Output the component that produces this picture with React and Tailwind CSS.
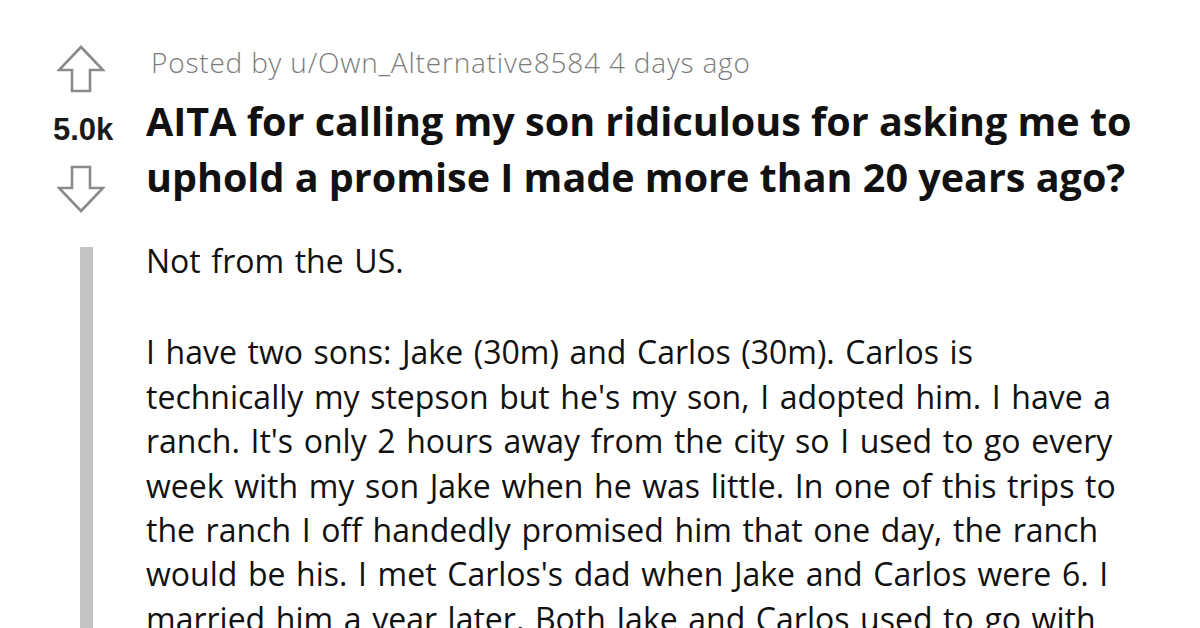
import React from 'react';

const ArrowUp = () => (
  <svg width="48" height="48" viewBox="0 0 48 48" fill="none">
    <path d="M24 2 L46 25 L33 25 L33 46 L15 46 L15 25 L2 25 Z" stroke="#8a8a8a" strokeWidth="2.6" strokeLinejoin="miter" />
  </svg>
);

const ArrowDown = () => (
  <svg width="48" height="48" viewBox="0 0 48 48" fill="none">
    <path d="M24 46 L46 23 L33 23 L33 2 L15 2 L15 23 L2 23 Z" stroke="#8a8a8a" strokeWidth="2.6" strokeLinejoin="miter" />
  </svg>
);

// lines as laid out in the post image
const BODY_LINES = [
  'I have two sons: Jake (30m) and Carlos (30m). Carlos is',
  "technically my stepson but he's my son, I adopted him. I have a",
  "ranch. It's only 2 hours away from the city so I used to go every",
  'week with my son Jake when he was little. In one of this trips to',
  'the ranch I off handedly promised him that one day, the ranch',
  "would be his. I met Carlos's dad when Jake and Carlos were 6. I",
  'married him a year later. Both Jake and Carlos used to go with',
  'me to the ranch every weekend after that.',
];

export default function App() {
  return (
    <div className="w-[1200px] h-[628px] overflow-hidden bg-white">
      <div className="flex">
        {/* vote column */}
        <div className="w-[146px] shrink-0 flex flex-col pt-[45px]">
          <div className="ml-[57px]">
            <ArrowUp />
          </div>
          <div className="mt-[22px] ml-[53px] text-[31px] font-bold text-[#1a1a1b] leading-[30px]" style={{ fontFamily: '"Liberation Sans", Arial, sans-serif' }}>
            5.0k
          </div>
          <div className="mt-[20px] ml-[57px]">
            <ArrowDown />
          </div>
          <div className="mt-[34px] ml-[80px] w-[13px] h-[400px] bg-[#c4c4c4]" />
        </div>

        {/* post */}
        <div className="flex-1 pt-[43px]">
          <div className="ml-[5px] text-[28px] leading-[38px] tracking-[0.8px] text-[#7c7c7c] font-light" style={{ fontFamily: '"Open Sans", "Noto Sans", sans-serif' }}>
            Posted by u/Own_Alternative8584 4 days ago
          </div>
          <h1 className="mt-[12px] w-[1010px] text-[39.5px] leading-[56px] font-bold text-[#111]" style={{ fontFamily: '"Open Sans", "Noto Sans", sans-serif' }}>
            AITA for calling my son ridiculous for asking me to uphold a promise I made more than 20 years ago?
          </h1>
          <div className="mt-[34px] text-[32px] leading-[44.4px] [word-spacing:2.3px] text-[#111]" style={{ fontFamily: '"Open Sans", "Noto Sans", sans-serif' }}>
            <p>Not from the US.</p>
            <div className="mt-[47px]">
              {BODY_LINES.map((line, i) => (
                <p key={i} className="whitespace-nowrap">{line}</p>
              ))}
            </div>
          </div>
        </div>
      </div>
    </div>
  );
}
